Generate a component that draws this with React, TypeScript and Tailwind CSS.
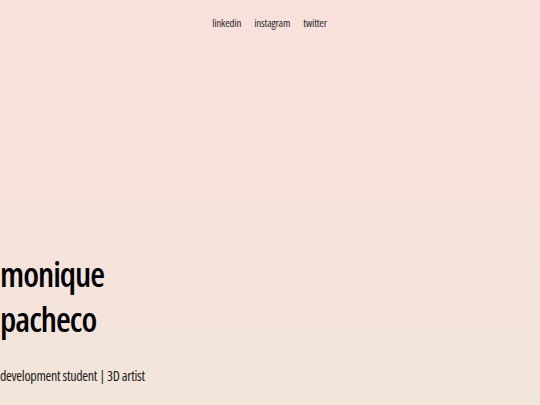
export default function App() {
  const links = ['linkedin', 'instagram', 'twitter'];

  return (
    <div className="flex h-[405px] w-full flex-col bg-gradient-to-b from-[#f9e0dc] to-[#f2e5da]">
      <nav className="flex justify-center gap-[13px] pt-[15px] pr-[1px]">
        {links.map((link) => (
          <a
            key={link}
            href="#"
            className="font-['Open_Sans',sans-serif] text-[11px] leading-[16px] tracking-[-0.2px] text-[#2b2b2b] [font-stretch:82%]"
          >
            {link}
          </a>
        ))}
      </nav>

      <main className="mt-auto mb-[19px]">
        <h1 className="font-['Open_Sans',sans-serif] text-[34px] font-semibold leading-[45px] tracking-[-1px] text-black [font-stretch:75%]">
          monique
          <br />
          pacheco
        </h1>
        <p className="mt-[24px] font-['Open_Sans',sans-serif] text-[14px] leading-[20px] tracking-[-0.3px] text-[#1c1c1c] [font-stretch:80%]">
          development student | 3D artist
        </p>
      </main>
    </div>
  );
}
